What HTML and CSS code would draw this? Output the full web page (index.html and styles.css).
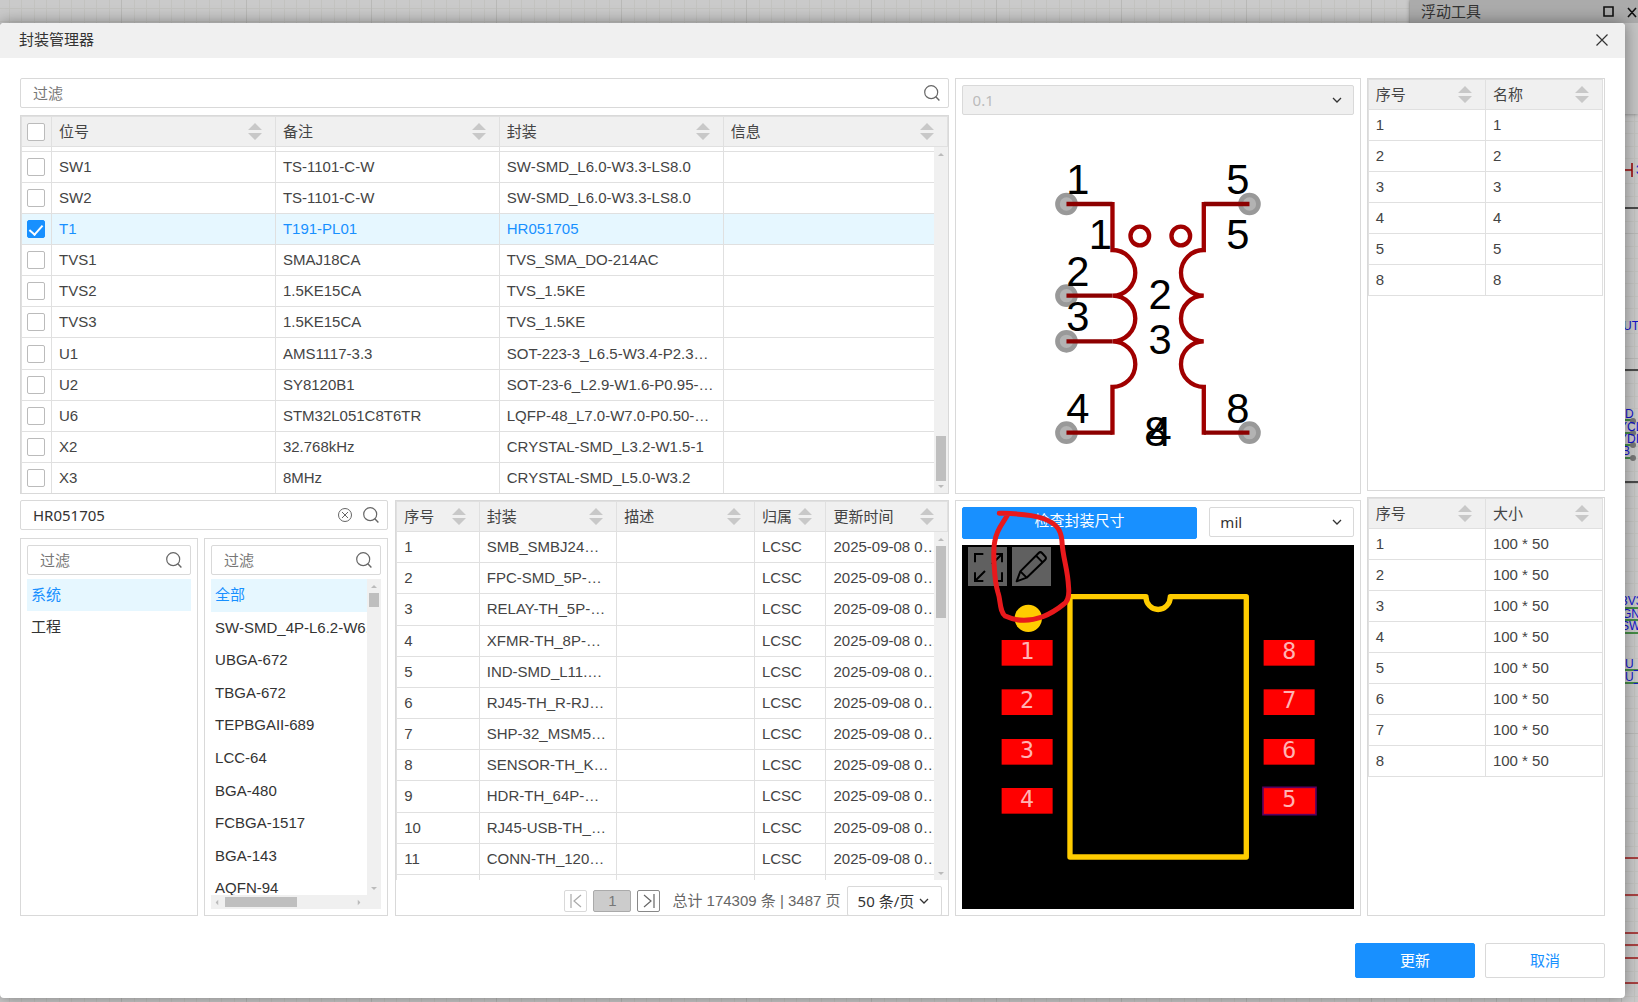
FILE: index.html
```html
<!DOCTYPE html>
<html lang="zh-CN">
<head>
    <meta charset="UTF-8">
    <meta name="viewport" content="width=device-width, initial-scale=1.0">
    <title>封装管理器</title>
    <link rel="stylesheet" href="styles.css">
</head>
<body>
    <svg class="symbols" aria-hidden="true">
        <symbol id="i-search" viewBox="0 0 16 16"><circle cx="7.2" cy="7.2" r="6.5" fill="none" stroke="currentColor" stroke-width="1.2"/><path d="M11.8 11.8L15.4 15.4" stroke="currentColor" stroke-width="1.4"/></symbol>
        <symbol id="i-sort" viewBox="0 0 14 17"><path d="M7 0L14 7H0ZM0 10H14L7 17Z" fill="#c8c8c8"/></symbol>
        <symbol id="i-down" viewBox="0 0 10 6"><path d="M1 1L5 5L9 1" fill="none" stroke="currentColor" stroke-width="1.3"/></symbol>
        <symbol id="i-arrow" viewBox="0 0 6 3"><path d="M0 3L3 0L6 3Z" fill="#bbb"/></symbol>
    </svg>

    <!-- schematic canvas behind the dialog -->
    <svg class="schematic" width="20" height="1002" aria-hidden="true">
        <path d="M7 170H14M14 163V177" stroke="#900" stroke-width="1.5"/>
        <path d="M7 208H20M7 370H20M7 482H20" stroke="#222" stroke-width="1.5"/>
        <g stroke="#1c7a1c" stroke-width="1.5"><path d="M7 420H16M7 433H16M7 445H16M7 458H16M7 608H20M7 620H20M7 633H20M7 670H20M7 683H20"/></g>
        <g fill="#777"><circle cx="15" cy="421" r="3"/><circle cx="15" cy="433" r="3"/><circle cx="15" cy="445" r="3"/><circle cx="15" cy="458" r="3"/></g>
        <g stroke="#a01818" stroke-width="1.5"><path d="M7 858H20M7 895H20M7 933H20M7 945H20M7 958H20M7 983H20"/></g>
        <g fill="#11c">
            <text x="18" y="174">3</text><text x="5" y="330">UT</text><text x="7" y="418">D</text><text x="1" y="431">YCL</text><text x="1" y="443">YDI</text><text x="4" y="455">B</text>
            <text x="3" y="605">3V3</text><text x="4" y="618">GN</text><text x="3" y="630">SW</text><text x="7" y="668">U_</text><text x="7" y="681">U_</text>
        </g>
    </svg>
    <section class="float-tool">
        <header>
            <span>浮动工具</span>
            <svg width="34" height="12" viewBox="0 0 34 12" fill="none" stroke="#111" stroke-width="1.6"><path d="M1 1H10V10H1ZM25 2L33 11M33 2L25 11"/></svg>
        </header>
    </section>

    <main class="dialog">
        <header class="dialog-header">
            <h1>封装管理器</h1>
            <button class="close" type="button" aria-label="关闭"><svg width="12" height="12" viewBox="0 0 12 12"><path d="M0.5 0.5L11.5 11.5M11.5 0.5L0.5 11.5" stroke="#333" stroke-width="1.2"/></svg></button>
        </header>

        <div class="dialog-body">
            <div class="col">
                <div class="half">
                    <div class="search">
                        <input type="text" placeholder="过滤" aria-label="过滤位号">
                        <svg class="icon"><use href="#i-search"/></svg>
                    </div>
                    <div class="panel table-panel">
                        <table class="parts">
                            <colgroup><col class="c-check"><col><col><col><col></colgroup>
                            <thead>
                                <tr>
                                    <th class="check"><input type="checkbox" aria-label="全选"></th>
                                    <th><div>位号<svg class="sort"><use href="#i-sort"/></svg></div></th>
                                    <th><div>备注<svg class="sort"><use href="#i-sort"/></svg></div></th>
                                    <th><div>封装<svg class="sort"><use href="#i-sort"/></svg></div></th>
                                    <th><div>信息<svg class="sort"><use href="#i-sort"/></svg></div></th>
                                </tr>
                            </thead>
                            <tbody>
                                <tr class="cut"><td></td><td></td><td></td><td></td><td></td></tr>
                                <tr><td class="check"><input type="checkbox" aria-label="SW1"></td><td>SW1</td><td>TS-1101-C-W</td><td>SW-SMD_L6.0-W3.3-LS8.0</td><td></td></tr>
                                <tr><td class="check"><input type="checkbox" aria-label="SW2"></td><td>SW2</td><td>TS-1101-C-W</td><td>SW-SMD_L6.0-W3.3-LS8.0</td><td></td></tr>
                                <tr class="selected"><td class="check"><input type="checkbox" aria-label="T1" checked></td><td>T1</td><td>T191-PL01</td><td>HR051705</td><td></td></tr>
                                <tr><td class="check"><input type="checkbox" aria-label="TVS1"></td><td>TVS1</td><td>SMAJ18CA</td><td>TVS_SMA_DO-214AC</td><td></td></tr>
                                <tr><td class="check"><input type="checkbox" aria-label="TVS2"></td><td>TVS2</td><td>1.5KE15CA</td><td>TVS_1.5KE</td><td></td></tr>
                                <tr><td class="check"><input type="checkbox" aria-label="TVS3"></td><td>TVS3</td><td>1.5KE15CA</td><td>TVS_1.5KE</td><td></td></tr>
                                <tr><td class="check"><input type="checkbox" aria-label="U1"></td><td>U1</td><td>AMS1117-3.3</td><td>SOT-223-3_L6.5-W3.4-P2.3…</td><td></td></tr>
                                <tr><td class="check"><input type="checkbox" aria-label="U2"></td><td>U2</td><td>SY8120B1</td><td>SOT-23-6_L2.9-W1.6-P0.95-…</td><td></td></tr>
                                <tr><td class="check"><input type="checkbox" aria-label="U6"></td><td>U6</td><td>STM32L051C8T6TR</td><td>LQFP-48_L7.0-W7.0-P0.50-…</td><td></td></tr>
                                <tr><td class="check"><input type="checkbox" aria-label="X2"></td><td>X2</td><td>32.768kHz</td><td>CRYSTAL-SMD_L3.2-W1.5-1</td><td></td></tr>
                                <tr><td class="check"><input type="checkbox" aria-label="X3"></td><td>X3</td><td>8MHz</td><td>CRYSTAL-SMD_L5.0-W3.2</td><td></td></tr>
                            </tbody>
                        </table>
                        <div class="scrollbar at-end"><svg class="tip"><use href="#i-arrow"/></svg><i></i><svg class="tip down"><use href="#i-arrow"/></svg></div>
                    </div>
                </div>

                <div class="half library">
                    <div class="sources">
                        <div class="search">
                            <input type="text" value="HR051705" aria-label="搜索封装">
                            <button class="clear" type="button" aria-label="清除"><svg width="14" height="14" viewBox="0 0 14 14" fill="none" stroke="#666"><circle cx="7" cy="7" r="6.5"/><path d="M4 4L10 10M10 4L4 10"/></svg></button>
                            <svg class="icon"><use href="#i-search"/></svg>
                        </div>
                        <div class="lists">
                            <div class="panel list-panel">
                                <div class="search">
                                    <input type="text" placeholder="过滤" aria-label="过滤来源">
                                    <svg class="icon"><use href="#i-search"/></svg>
                                </div>
                                <ul>
                                    <li class="selected">系统</li>
                                    <li>工程</li>
                                </ul>
                            </div>
                            <div class="panel list-panel">
                                <div class="search">
                                    <input type="text" placeholder="过滤" aria-label="过滤分类">
                                    <svg class="icon"><use href="#i-search"/></svg>
                                </div>
                                <div class="scroll-list">
                                    <ul>
                                        <li class="selected">全部</li>
                                        <li>SW-SMD_4P-L6.2-W6.2</li>
                                        <li>UBGA-672</li>
                                        <li>TBGA-672</li>
                                        <li>TEPBGAII-689</li>
                                        <li>LCC-64</li>
                                        <li>BGA-480</li>
                                        <li>FCBGA-1517</li>
                                        <li>BGA-143</li>
                                        <li>AQFN-94</li>
                                    </ul>
                                    <div class="scrollbar inline"><svg class="tip"><use href="#i-arrow"/></svg><i></i><svg class="tip down"><use href="#i-arrow"/></svg></div>
                                    <div class="scrollbar-x"><svg class="tip left"><use href="#i-arrow"/></svg><i></i><svg class="tip right"><use href="#i-arrow"/></svg></div>
                                </div>
                            </div>
                        </div>
                    </div>

                    <div class="panel table-panel">
                        <div class="rows">
                            <table class="footprints">
                                <colgroup><col class="w15"><col class="w25"><col class="w25"><col class="w13"><col class="w22"></colgroup>
                                <thead>
                                    <tr>
                                        <th><div>序号<svg class="sort"><use href="#i-sort"/></svg></div></th>
                                        <th><div>封装<svg class="sort"><use href="#i-sort"/></svg></div></th>
                                        <th><div>描述<svg class="sort"><use href="#i-sort"/></svg></div></th>
                                        <th><div>归属<svg class="sort"><use href="#i-sort"/></svg></div></th>
                                        <th><div>更新时间<svg class="sort"><use href="#i-sort"/></svg></div></th>
                                    </tr>
                                </thead>
                                <tbody>
                                    <tr><td>1</td><td>SMB_SMBJ24…</td><td></td><td>LCSC</td><td>2025-09-08 0…</td></tr>
                                    <tr><td>2</td><td>FPC-SMD_5P-…</td><td></td><td>LCSC</td><td>2025-09-08 0…</td></tr>
                                    <tr><td>3</td><td>RELAY-TH_5P-…</td><td></td><td>LCSC</td><td>2025-09-08 0…</td></tr>
                                    <tr><td>4</td><td>XFMR-TH_8P-…</td><td></td><td>LCSC</td><td>2025-09-08 0…</td></tr>
                                    <tr><td>5</td><td>IND-SMD_L11.…</td><td></td><td>LCSC</td><td>2025-09-08 0…</td></tr>
                                    <tr><td>6</td><td>RJ45-TH_R-RJ…</td><td></td><td>LCSC</td><td>2025-09-08 0…</td></tr>
                                    <tr><td>7</td><td>SHP-32_MSM5…</td><td></td><td>LCSC</td><td>2025-09-08 0…</td></tr>
                                    <tr><td>8</td><td>SENSOR-TH_K…</td><td></td><td>LCSC</td><td>2025-09-08 0…</td></tr>
                                    <tr><td>9</td><td>HDR-TH_64P-…</td><td></td><td>LCSC</td><td>2025-09-08 0…</td></tr>
                                    <tr><td>10</td><td>RJ45-USB-TH_…</td><td></td><td>LCSC</td><td>2025-09-08 0…</td></tr>
                                    <tr><td>11</td><td>CONN-TH_120…</td><td></td><td>LCSC</td><td>2025-09-08 0…</td></tr>
                                    <tr class="cut"><td></td><td></td><td></td><td></td><td></td></tr>
                                </tbody>
                            </table>
                            <div class="scrollbar"><svg class="tip"><use href="#i-arrow"/></svg><i></i><svg class="tip down"><use href="#i-arrow"/></svg></div>
                        </div>
                        <nav class="pager">
                            <button type="button" disabled aria-label="首页"><svg width="12" height="14" viewBox="0 0 12 14" fill="none" stroke="#aaa" stroke-width="1.2"><path d="M1 0V14M11 1L4 7L11 13"/></svg></button>
                            <button class="current" type="button">1</button>
                            <button type="button" aria-label="末页"><svg width="12" height="14" viewBox="0 0 12 14" fill="none" stroke="#666" stroke-width="1.2"><path d="M11 0V14M1 1L8 7L1 13"/></svg></button>
                            <span>总计 174309 条 | 3487 页</span>
                            <div class="select page-size">
                                <select aria-label="每页条数"><option>50 条/页</option></select>
                                <svg class="caret"><use href="#i-down"/></svg>
                            </div>
                        </nav>
                    </div>
                </div>
            </div>

            <div class="col">
                <div class="panel preview">
                    <div class="select disabled">
                        <select aria-label="子库" disabled><option>0.1</option></select>
                        <svg class="caret"><use href="#i-down"/></svg>
                    </div>
                    <!-- transformer symbol -->
                    <svg class="drawing" viewBox="66 165 1176 1116">
                        <g fill="#b3b3b3" stroke="#999" stroke-width="14">
                            <circle cx="379" cy="432" r="27"/><circle cx="379" cy="707" r="27"/><circle cx="379" cy="844" r="27"/><circle cx="379" cy="1118" r="27"/>
                            <circle cx="928" cy="432" r="27"/><circle cx="928" cy="1118" r="27"/>
                        </g>
                        <g fill="none" stroke="#a00000" stroke-width="13">
                            <path d="M517 426V570A68 68 0 0 1 517 707A68 68 0 0 1 517 844A68 68 0 0 1 517 981V1124"/>
                            <path d="M791 426V570A68 68 0 0 0 791 707A68 68 0 0 0 791 844A68 68 0 0 0 791 981V1124"/>
                            <circle cx="599" cy="528" r="28"/><circle cx="722" cy="528" r="28"/>
                        </g>
                        <path d="M379 432H517M379 707H517M379 844H517M379 1118H517M791 432H928M791 1118H928" stroke="#8c0000" stroke-width="13"/>
                        <g class="pin-text">
                            <text x="413" y="401">1</text><text x="893" y="401">5</text>
                            <text x="481" y="567">1</text><text x="893" y="567">5</text>
                            <text x="413" y="678">2</text><text x="413" y="812">3</text>
                            <text x="660" y="746">2</text><text x="660" y="881">3</text>
                            <text x="413" y="1088">4</text><text x="893" y="1088">8</text>
                            <text x="647" y="1157">8</text><text x="660" y="1157">4</text>
                        </g>
                    </svg>
                </div>

                <div class="panel preview">
                    <div class="preview-bar">
                        <button class="btn primary" type="button">检查封装尺寸</button>
                        <div class="select">
                            <select aria-label="单位"><option>mil</option></select>
                            <svg class="caret"><use href="#i-down"/></svg>
                        </div>
                    </div>
                    <div class="board">
                        <!-- footprint -->
                        <svg class="drawing" viewBox="39 165 1173 1092">
                            <path d="M589 320H361V1101H890V320H662A36 38 0 0 1 589 320Z" fill="none" stroke="#fc0" stroke-width="16" stroke-linejoin="round"/>
                            <circle cx="236" cy="385" r="41" fill="#fc0"/>
                            <g fill="#f00">
                                <rect x="156" y="450" width="153" height="77"/><rect x="156" y="598" width="153" height="77"/><rect x="156" y="747" width="153" height="77"/><rect x="156" y="894" width="153" height="77"/>
                                <rect x="942" y="450" width="153" height="77"/><rect x="942" y="598" width="153" height="77"/><rect x="942" y="747" width="153" height="77"/>
                                <rect x="940" y="892" width="159" height="82" stroke="#5a0060" stroke-width="5"/>
                            </g>
                            <g class="pad-text">
                                <text x="232" y="508">1</text><text x="232" y="655">2</text><text x="232" y="804">3</text><text x="232" y="951">4</text>
                                <text x="1019" y="508">8</text><text x="1019" y="655">7</text><text x="1019" y="804">6</text><text x="1019" y="951">5</text>
                            </g>
                        </svg>
                        <div class="tools">
                            <button type="button" aria-label="全屏"><svg width="39" height="39" viewBox="0 0 117 117" fill="none" stroke="#000" stroke-width="6"><path d="M21 46V21H46M79 21H102V46M102 21L72 51M21 76V102H46M21 102L51 72M79 102H102V76"/></svg></button>
                            <button type="button" aria-label="编辑"><svg width="39" height="39" viewBox="0 0 117 117" fill="none" stroke="#000" stroke-width="6" stroke-linejoin="round"><path d="M14 103L25 73L80 18Q85 13 90 18L100 29Q104 34 99 39L44 92ZM25 73L44 92M72 26L92 46"/></svg></button>
                        </div>
                    </div>
                    <svg class="markup" viewBox="15 30 1218 1248" aria-hidden="true"><path d="M145 67C185 68 235 68 275 82C320 98 331 118 334 150C336 200 352 235 354 290Q358 330 338 342Q310 365 276 379C235 394 195 392 163 377C145 362 150 330 141 305C130 270 125 180 132 150C137 115 158 95 170 72" fill="none" stroke="#e8191c" stroke-width="15" stroke-linecap="round" stroke-linejoin="round"/></svg>
                </div>
            </div>

            <div class="col col-pins">
                <div class="panel pins">
                    <table>
                        <thead><tr><th><div>序号<svg class="sort"><use href="#i-sort"/></svg></div></th><th><div>名称<svg class="sort"><use href="#i-sort"/></svg></div></th></tr></thead>
                        <tbody>
                            <tr><td>1</td><td>1</td></tr>
                            <tr><td>2</td><td>2</td></tr>
                            <tr><td>3</td><td>3</td></tr>
                            <tr><td>4</td><td>4</td></tr>
                            <tr><td>5</td><td>5</td></tr>
                            <tr><td>8</td><td>8</td></tr>
                        </tbody>
                    </table>
                </div>
                <div class="panel pins">
                    <table>
                        <thead><tr><th><div>序号<svg class="sort"><use href="#i-sort"/></svg></div></th><th><div>大小<svg class="sort"><use href="#i-sort"/></svg></div></th></tr></thead>
                        <tbody>
                            <tr><td>1</td><td>100 * 50</td></tr>
                            <tr><td>2</td><td>100 * 50</td></tr>
                            <tr><td>3</td><td>100 * 50</td></tr>
                            <tr><td>4</td><td>100 * 50</td></tr>
                            <tr><td>5</td><td>100 * 50</td></tr>
                            <tr><td>6</td><td>100 * 50</td></tr>
                            <tr><td>7</td><td>100 * 50</td></tr>
                            <tr><td>8</td><td>100 * 50</td></tr>
                        </tbody>
                    </table>
                </div>
            </div>
        </div>

        <footer class="dialog-footer">
            <button class="btn primary" type="button">更新</button>
            <button class="btn" type="button">取消</button>
        </footer>
    </main>
</body>
</html>
```

FILE: styles.css
```css
:root {
    --border: #d9d9d9;
    --cell-border: #e0e0e0;
    --header-bg: #f0f0f0;
    --blue: #1890ff;
    --selected: #e6f7ff;
    --text: #444;
}

* {
    box-sizing: border-box;
}

body {
    margin: 0;
    height: 100vh;
    min-height: 900px;
    position: relative;
    overflow: hidden;
    display: flex;
    padding: 23px 13px 4px 0;
    font-family: "Liberation Sans", "Noto Sans CJK SC", sans-serif;
    font-size: 15px;
    line-height: 22px;
    color: var(--text);
    background-color: #cacaca;
    background-image:
        linear-gradient(90deg, #b9b9b7 1px, transparent 1px),
        linear-gradient(#b9b9b7 1px, transparent 1px),
        linear-gradient(90deg, #c3c3c0 1px, transparent 1px, transparent 13px, #c3c3c0 13px, #c3c3c0 14px, transparent 14px),
        linear-gradient(#c3c3c0 1px, transparent 1px, transparent 13px, #c3c3c0 13px, #c3c3c0 14px, transparent 14px);
    background-size: 125px 125px, 125px 125px, 25px 25px, 25px 25px;
    background-position: 121px 0, 0 108px, 21px 0, 0 8px;
}

.symbols {
    display: none;
}

.schematic {
    position: absolute;
    top: 0;
    right: 0;
    font-size: 12px;
}

.float-tool {
    position: absolute;
    top: 0;
    right: 0;
    width: 228px;
    height: 114px;
    background: #c4c4c4;
    box-shadow: 0 0 4px rgba(0, 0, 0, 0.4);
}

.float-tool header {
    display: flex;
    justify-content: space-between;
    align-items: center;
    height: 23px;
    padding: 0 1px 0 11px;
    background: #ababab;
    color: #333;
}

/* dialog */
.dialog {
    position: relative;
    flex: 1;
    min-width: 0;
    display: flex;
    flex-direction: column;
    background: #fff;
    border-radius: 4px;
    box-shadow: 0 0 16px rgba(0, 0, 0, 0.4);
}

.dialog-header {
    display: flex;
    justify-content: space-between;
    align-items: center;
    height: 35px;
    padding: 0 17px 2px 19px;
    background: var(--header-bg);
    border-radius: 4px 4px 0 0;
}

h1 {
    margin: 0;
    font-size: 15px;
    font-weight: 400;
    color: #333;
}

button {
    font: inherit;
    cursor: pointer;
}

.close,
.clear {
    display: flex;
    padding: 0;
    border: none;
    background: none;
}

.dialog-body {
    flex: 1;
    min-height: 0;
    display: grid;
    grid-template-columns: 928fr 406fr 238fr;
    gap: 6px;
    padding: 20px 20px 0;
}

.col {
    display: grid;
    grid-template-rows: 1fr 1fr;
    grid-template-columns: minmax(0, 1fr);
    gap: 6px;
    min-width: 0;
    min-height: 0;
}

.col-pins {
    grid-template-rows: 413fr 419fr;
}

.half {
    display: flex;
    flex-direction: column;
    gap: 7px;
    min-height: 0;
}

.panel {
    min-width: 0;
    min-height: 0;
    border: 1px solid var(--border);
    background: #fff;
}

.dialog-footer {
    display: flex;
    justify-content: flex-end;
    gap: 10px;
    padding: 27px 20px 20px;
}

.btn {
    width: 120px;
    height: 35px;
    border: 1px solid var(--border);
    border-radius: 2px;
    background: #fff;
    color: var(--blue);
}

.btn.primary {
    border-color: var(--blue);
    background: var(--blue);
    color: #fff;
}

/* inputs */
.search {
    display: flex;
    align-items: center;
    gap: 11px;
    height: 30px;
    flex: none;
    padding: 0 8px 0 12px;
    border: 1px solid var(--border);
    border-radius: 2px;
}

.search input {
    flex: 1;
    min-width: 0;
    padding: 0;
    border: none;
    outline: none;
    background: none;
    font: 15px "Noto Sans", "Noto Sans CJK SC", sans-serif;
    color: #333;
}

.search input::placeholder {
    color: #777;
}

.icon {
    width: 16px;
    height: 16px;
    flex: none;
    color: #666;
}

input[type="checkbox"] {
    appearance: none;
    display: block;
    width: 18px;
    height: 18px;
    margin: 0 5px;
    border: 1px solid #bbb;
    border-radius: 2px;
    background: #fff;
}

input[type="checkbox"]:checked {
    border-color: var(--blue);
    background: var(--blue);
}

input[type="checkbox"]:checked::before {
    content: "";
    display: block;
    width: 6px;
    height: 11px;
    margin: 1px auto 0;
    border: solid #fff;
    border-width: 0 2px 2px 0;
    transform: rotate(42deg);
}

.select {
    display: flex;
    align-items: center;
    height: 30px;
    padding: 0 11px 0 10px;
    border: 1px solid var(--border);
    border-radius: 2px;
    color: #333;
}

.select select {
    flex: 1;
    min-width: 0;
    appearance: none;
    padding: 0;
    border: none;
    background: none;
    font: 15px "Noto Sans", "Noto Sans CJK SC", sans-serif;
    color: inherit;
    opacity: 1;
}

.select.disabled {
    background: var(--header-bg);
}

.select.disabled select {
    color: #bbb;
}

.caret {
    width: 10px;
    height: 6px;
    flex: none;
}

/* tables */
table {
    width: 100%;
    table-layout: fixed;
    border-collapse: separate;
    border-spacing: 0;
    border-left: 1px solid var(--cell-border);
}

th,
td {
    padding: 4px 7px;
    border-right: 1px solid var(--cell-border);
    border-bottom: 1px solid var(--cell-border);
    font-weight: 400;
    text-align: left;
    white-space: nowrap;
    overflow: hidden;
}

th {
    height: 31px;
    padding: 0 13px 0 7px;
    border-top: 1px solid var(--cell-border);
    background: var(--header-bg);
}

th div {
    display: flex;
    justify-content: space-between;
    align-items: center;
}

.check {
    padding: 0;
}

.cut td {
    height: 5px;
    padding: 0;
}

.sort {
    width: 14px;
    height: 17px;
    flex: none;
}

tr.selected td,
li.selected {
    background: var(--selected);
    color: var(--blue);
}

.c-check { width: 30px; }
.w13 { width: 13%; }
.w15 { width: 15%; }
.w22 { width: 22%; }
.w25 { width: 25%; }

.table-panel {
    position: relative;
    flex: 1;
    display: flex;
    flex-direction: column;
    overflow: hidden;
}

.parts,
.footprints {
    height: 100%;
}

.parts tbody tr:last-child td,
.footprints .cut td {
    border-bottom: none;
}

.rows {
    position: relative;
    flex: 1;
    min-height: 0;
    overflow: hidden;
}

/* scrollbars lie over the right edge of the rows */
.scrollbar {
    position: absolute;
    top: 31px;
    right: 0;
    bottom: 0;
    width: 14px;
    display: flex;
    flex-direction: column;
    align-items: center;
    padding: 6px 0 5px;
    background: var(--header-bg);
}

.scrollbar i {
    width: 10px;
    height: 72px;
    margin: 5px 0 auto;
    background: #bfbfbf;
}

.scrollbar.at-end i {
    height: 45px;
    margin: auto 0 4px;
}

.tip {
    width: 6px;
    height: 3px;
    flex: none;
}

.tip.down { transform: rotate(180deg); }
.tip.left { transform: rotate(-90deg); }
.tip.right { transform: rotate(90deg); }

/* footprint library */
.half.library {
    display: grid;
    grid-template-columns: minmax(0, 368fr) minmax(0, 553fr);
}

.sources {
    display: flex;
    flex-direction: column;
    gap: 8px;
    min-height: 0;
}

.lists {
    flex: 1;
    min-height: 0;
    display: grid;
    grid-template-columns: 178fr 184fr;
    gap: 6px;
}

.list-panel {
    display: flex;
    flex-direction: column;
    gap: 4px;
    padding: 6px;
}

ul {
    list-style: none;
    margin: 0;
    padding: 0;
    color: #333;
}

li {
    padding: 0 4px;
    line-height: 32px;
    white-space: nowrap;
}

.scroll-list {
    flex: 1;
    min-height: 0;
    display: grid;
    grid-template-columns: minmax(0, 1fr) 14px;
    grid-template-rows: minmax(0, 1fr) 14px;
    overflow: hidden;
}

.scroll-list ul {
    display: flex;
    flex-direction: column;
    margin-bottom: -10px;
    overflow: hidden;
}

.scroll-list li {
    flex: 1;
}

.scrollbar.inline {
    position: static;
}

.scrollbar.inline i {
    height: 14px;
}

.scrollbar-x {
    grid-column: 1 / 3;
    position: relative;
    display: flex;
    align-items: center;
    padding: 0 19px 0 3px;
    background: var(--header-bg);
}

.scrollbar-x i {
    width: 72px;
    height: 10px;
    margin: 0 auto 0 5px;
    background: #bfbfbf;
}

.pager {
    display: flex;
    justify-content: flex-end;
    align-items: center;
    gap: 6px;
    height: 35px;
    padding: 6px 6px 0 0;
    color: #666;
    white-space: nowrap;
}

.pager button {
    display: flex;
    align-items: center;
    justify-content: center;
    width: 23px;
    height: 22px;
    padding: 0;
    border: 1px solid #888;
    border-radius: 2px;
    background: #fff;
    color: #777;
}

.pager button:disabled {
    border-color: var(--border);
}

.pager .current {
    width: 38px;
    border-color: #aaa;
    background: #ccc;
}

.pager span {
    padding-left: 6px;
}

.page-size {
    width: 95px;
    padding-right: 12px;
}

/* previews */
.preview {
    position: relative;
    display: flex;
    flex-direction: column;
    padding: 6px;
}

.preview-bar {
    display: grid;
    grid-template-columns: minmax(0, 235fr) minmax(0, 144fr);
    gap: 12px;
    margin-bottom: 6px;
}

.preview-bar .btn {
    width: auto;
    height: 32px;
    padding-bottom: 5px;
}

.drawing {
    display: block;
    width: 100%;
    flex: 1;
    min-height: 0;
}

.pin-text {
    font-size: 125px;
    text-anchor: middle;
    fill: #000;
}

.pad-text {
    font-family: "DejaVu Sans Mono", monospace;
    font-size: 70px;
    text-anchor: middle;
    fill: #ffb3b3;
}

.board {
    position: relative;
    flex: 1;
    min-height: 0;
    display: flex;
    background: #000;
}

.tools {
    position: absolute;
    top: 2px;
    left: 6px;
    display: flex;
    gap: 5px;
}

.tools button {
    display: flex;
    padding: 0;
    border: none;
    background: #606060;
}

.markup {
    position: absolute;
    top: 0;
    left: 0;
    width: 100%;
    height: 100%;
    pointer-events: none;
}

.pins {
    padding-right: 1px;
}
```
